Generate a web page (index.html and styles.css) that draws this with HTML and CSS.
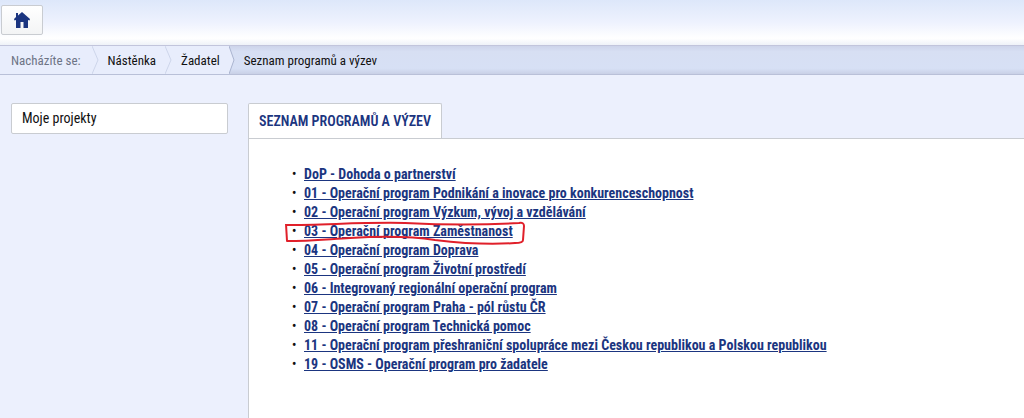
FILE: index.html
```html
<!DOCTYPE html>
<html lang="cs">
<head>
  <meta charset="UTF-8" />
  <meta name="viewport" content="width=device-width, initial-scale=1" />
  <title>Seznam programů a výzev</title>
  <link rel="stylesheet" href="styles.css">
</head>
<body>

<header class="topbar">
  <button class="home-btn" type="button" aria-label="Domů">
    <svg width="18" height="16" viewBox="0 0 18 16" aria-hidden="true">
      <path fill="#1b3580" d="M9 0 L17 7 L16.500 8.500 L15 8 L15 16 L10.500 16 L10.500 10 L7.500 10 L7.500 16 L3 16 L3 8 L1.500 8.500 L1 7 L3 5 L3 1 L5 1 L5 3.500 Z"/>
    </svg>
  </button>
</header>

<nav class="breadcrumb">
  <span class="crumb label">Nacházíte se:</span>
  <svg class="arrow" width="7" height="28" viewBox="0 0 7 28"><path d="M0 0 L6 14 L0 28" fill="none" stroke="#cdd5ea"/></svg>
  <a class="crumb" href="#">Nástěnka</a>
  <svg class="arrow" width="7" height="28" viewBox="0 0 7 28"><path d="M0 0 L6 14 L0 28" fill="none" stroke="#cdd5ea"/></svg>
  <a class="crumb" href="#">Žadatel</a>
  <div class="current">
    <svg class="arrow" width="7" height="28" viewBox="0 0 7 28"><path d="M0 0 L5 14 L0 28" fill="#e8edfc" stroke="#aab4cf"/></svg>
    <span class="crumb">Seznam programů a výzev</span>
  </div>
</nav>

<div class="layout">
  <aside class="sidebar">
    <a class="side-item" href="#">Moje projekty</a>
  </aside>

  <main class="content">
    <h1 class="tab">SEZNAM PROGRAMŮ A VÝZEV</h1>
    <section class="panel">
      <ul class="programs">
        <li><a href="#">DoP - Dohoda o partnerství</a></li>
        <li><a href="#">01 - Operační program Podnikání a inovace pro konkurenceschopnost</a></li>
        <li><a href="#">02 - Operační program Výzkum, vývoj a vzdělávání</a></li>
        <li class="marked">
          <a href="#">03 - Operační program Zaměstnanost</a>
          <svg class="mark" width="242" height="26" viewBox="0 0 242 26" aria-hidden="true">
            <path d="M1 4 C40 4 80 1 120 2 C160 4 200 4 234 2 Q239 1 239 5 L238 19 Q238 22 230 22 C205 24 175 22 150 19 C125 15 95 15 65 17 C45 18 25 20 2 20 L1 3" fill="none" stroke="#e0202a" stroke-width="2" stroke-linejoin="round"/>
          </svg>
        </li>
        <li><a href="#">04 - Operační program Doprava</a></li>
        <li><a href="#">05 - Operační program Životní prostředí</a></li>
        <li><a href="#">06 - Integrovaný regionální operační program</a></li>
        <li><a href="#">07 - Operační program Praha - pól růstu ČR</a></li>
        <li><a href="#">08 - Operační program Technická pomoc</a></li>
        <li><a href="#">11 - Operační program přeshraniční spolupráce mezi Českou republikou a Polskou republikou</a></li>
        <li><a href="#">19 - OSMS - Operační program pro žadatele</a></li>
      </ul>
    </section>
  </main>
</div>

</body>
</html>
```
FILE: styles.css
```css
:root {
  --navy: #1b3580;
  --bg: #ecf0fd;
  --border: #c9ccd1;
}

* {
  box-sizing: border-box;
  margin: 0;
  padding: 0;
}

body {
  min-height: 100vh;
  display: flex;
  flex-direction: column;
  background: var(--bg);
  color: #111;
  font-family: "Roboto Condensed", Roboto, sans-serif;
}

a {
  color: inherit;
  text-decoration: none;
}

.topbar {
  height: 45px;
  padding: 5px 1px;
  background: linear-gradient(#dde7fa, #eef2fe 50%, #fff 85%, #eef2f8);
}

.home-btn {
  display: flex;
  align-items: center;
  justify-content: center;
  width: 42px;
  height: 30px;
  background: linear-gradient(#fff, #f3f4f5);
  border: 1px solid var(--border);
  border-radius: 2px;
  cursor: pointer;
}

.breadcrumb {
  display: flex;
  align-items: flex-start;
  height: 30px;
  background: #e8edfc;
  border-top: 1px solid #c2c5dc;
  border-bottom: 1px solid #b9c0d8;
  font-size: 13px;
  line-height: 30px;
  white-space: nowrap;
}

.crumb {
  padding: 0 9px;
}

.label {
  padding: 0 11px;
  color: #6d7485;
}

.arrow {
  flex: none;
}

.current {
  flex: 1;
  display: flex;
  height: 28px;
  background: linear-gradient(#cdd4ea, #d7dff3 20%, #d7e0f5 80%, #c9d0e6);
}

.current .crumb {
  padding-left: 8px;
}

.layout {
  flex: 1;
  display: flex;
  gap: 20px;
  padding: 28px 0 0 11px;
}

.sidebar {
  flex: none;
  width: 217px;
}

.side-item {
  display: block;
  padding: 0 10px;
  background: #fff;
  border: 1px solid var(--border);
  border-radius: 2px;
  font-size: 14px;
  line-height: 29px;
}

.content {
  flex: 1;
  display: flex;
  flex-direction: column;
  align-items: flex-start;
  min-width: 0;
}

.tab {
  padding: 0 10px;
  background: #fff;
  border: 1px solid var(--border);
  border-bottom: none;
  border-radius: 2px 2px 0 0;
  color: var(--navy);
  font-size: 14px;
  font-weight: 600;
  line-height: 34px;
}

.panel {
  flex: 1;
  align-self: stretch;
  padding: 26px 20px 20px 43px;
  background: #fff;
  border-top: 1px solid var(--border);
  border-left: 1px solid var(--border);
}

.programs {
  list-style: none;
  color: var(--navy);
  font-size: 14px;
  font-weight: 700;
  line-height: 19px;
}

.programs li {
  display: flex;
}

.programs li::before {
  content: "•";
  width: 12px;
  color: #111;
  font-size: 12px;
}

.programs a {
  text-decoration: underline;
}

.marked {
  position: relative;
}

.mark {
  position: absolute;
  left: -7px;
  top: -1px;
}
```
